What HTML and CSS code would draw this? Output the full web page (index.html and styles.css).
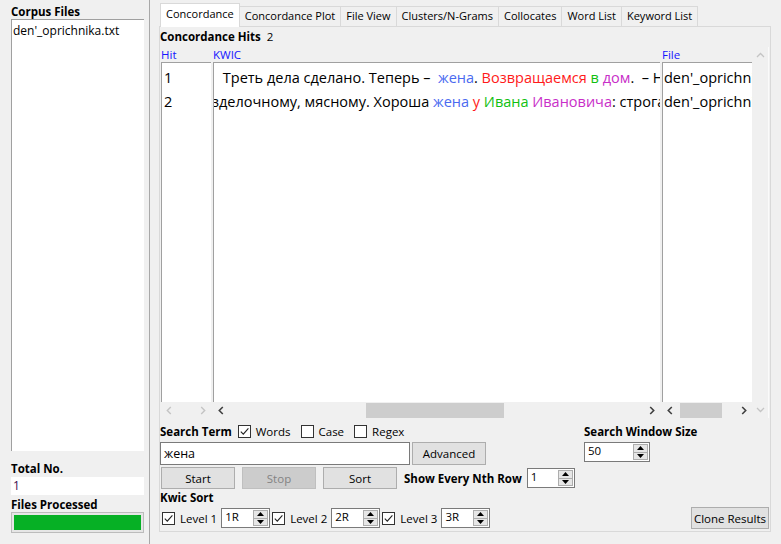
FILE: index.html
```html
<!DOCTYPE html>
<html>
<head>
<meta charset="utf-8">
<link rel="stylesheet" href="styles.css">
</head>
<body>
<div class="app">
  <aside class="side">
    <div class="lbl">Corpus Files</div>
    <div class="list"><div class="item">den'_oprichnika.txt</div></div>
    <div class="lbl total">Total No.</div>
    <div class="field">1</div>
    <div class="lbl">Files Processed</div>
    <div class="progress"><div class="fill"></div></div>
  </aside>
  <main class="main">
    <nav class="tabs">
      <div class="tab active">Concordance</div>
      <div class="tab">Concordance Plot</div>
      <div class="tab">File View</div>
      <div class="tab">Clusters/N-Grams</div>
      <div class="tab">Collocates</div>
      <div class="tab">Word List</div>
      <div class="tab">Keyword List</div>
    </nav>
    <section class="panel">
      <div class="hits"><span class="b">Concordance Hits</span><span class="count">2</span></div>
      <div class="table">
        <div class="col c-hit">
          <div class="head">Hit</div>
          <div class="box">
            <div class="row">1</div>
            <div class="row">2</div>
          </div>
          <div class="hscroll">
            <span class="arr"><svg width="6" height="9" viewBox="0 0 6 9"><path d="M4.8 1L1.3 4.5L4.8 8" stroke="#c4c4c4" stroke-width="1.4" fill="none"/></svg></span>
            <span class="track"></span>
            <span class="arr"><svg width="6" height="9" viewBox="0 0 6 9"><path d="M1.2 1L4.7 4.5L1.2 8" stroke="#c4c4c4" stroke-width="1.4" fill="none"/></svg></span>
          </div>
        </div>
        <div class="col c-kwic">
          <div class="head">KWIC</div>
          <div class="box">
            <div class="row kw"><span class="left-ctx wide">  Треть дела сделано. Теперь –  </span><span class="k">жена</span><span class="right-ctx">. <span class="r">Возвращаемся</span> <span class="g">в</span> <span class="m">дом</span>.  – Н</span></div>
            <div class="row kw"><span class="left-ctx">изделочному, мясному. Хороша </span><span class="k">жена</span><span class="right-ctx"> <span class="r">у</span> <span class="g">Ивана</span> <span class="m">Ивановича</span>: строгая</span></div>
          </div>
          <div class="hscroll">
            <span class="arr"><svg width="6" height="9" viewBox="0 0 6 9"><path d="M4.8 1L1.3 4.5L4.8 8" stroke="#404040" stroke-width="1.6" fill="none"/></svg></span>
            <span class="track"><span class="thumb" style="margin-left:137px;width:138px"></span></span>
            <span class="arr"><svg width="6" height="9" viewBox="0 0 6 9"><path d="M1.2 1L4.7 4.5L1.2 8" stroke="#404040" stroke-width="1.6" fill="none"/></svg></span>
          </div>
        </div>
        <div class="col c-file">
          <div class="head">File</div>
          <div class="box">
            <div class="row">den'_oprichnika.txt</div>
            <div class="row">den'_oprichnika.txt</div>
          </div>
          <div class="hscroll">
            <span class="arr"><svg width="6" height="9" viewBox="0 0 6 9"><path d="M4.8 1L1.3 4.5L4.8 8" stroke="#404040" stroke-width="1.6" fill="none"/></svg></span>
            <span class="track"><span class="thumb" style="margin-left:2px;width:42px"></span></span>
            <span class="arr"><svg width="6" height="9" viewBox="0 0 6 9"><path d="M1.2 1L4.7 4.5L1.2 8" stroke="#404040" stroke-width="1.6" fill="none"/></svg></span>
          </div>
        </div>
        <div class="vscroll">
          <svg width="9" height="6" viewBox="0 0 9 6"><path d="M1 5L4.5 1.5L8 5" stroke="#c4c4c4" stroke-width="1.3" fill="none"/></svg>
          <svg width="9" height="6" viewBox="0 0 9 6"><path d="M1 1L4.5 4.5L8 1" stroke="#c4c4c4" stroke-width="1.3" fill="none"/></svg>
        </div>
      </div>
      <div class="controls">
        <div class="left">
          <div class="line la">
            <span class="b st">Search Term</span>
            <label class="chk"><span class="cb"><svg width="11" height="11" viewBox="0 0 11 11"><path d="M1.8 5.6L4.3 8.2L9.4 2.4" stroke="#222" stroke-width="1.1" fill="none"/></svg></span>Words</label>
            <label class="chk"><span class="cb"></span>Case</label>
            <label class="chk"><span class="cb"></span>Regex</label>
          </div>
          <div class="line lb">
            <div class="input">жена</div>
            <div class="btn adv">Advanced</div>
          </div>
          <div class="line lc">
            <div class="btn w74">Start</div>
            <div class="btn w74 dis">Stop</div>
            <div class="btn w74">Sort</div>
            <span class="b nth">Show Every Nth Row</span>
            <div class="spin s48"><span class="val">1</span><span class="arrows"><span class="ab"><svg width="7" height="4" viewBox="0 0 7 4"><path d="M0 4L3.5 0L7 4Z" fill="#000"/></svg></span><span class="ab"><svg width="7" height="4" viewBox="0 0 7 4"><path d="M0 0L3.5 4L7 0Z" fill="#000"/></svg></span></span></div>
          </div>
          <div class="line ld"><span class="b">Kwic Sort</span></div>
          <div class="line le">
            <label class="chk"><span class="cb"><svg width="11" height="11" viewBox="0 0 11 11"><path d="M1.8 5.6L4.3 8.2L9.4 2.4" stroke="#222" stroke-width="1.1" fill="none"/></svg></span>Level 1</label>
            <div class="spin s49"><span class="val">1R</span><span class="arrows"><span class="ab"><svg width="7" height="4" viewBox="0 0 7 4"><path d="M0 4L3.5 0L7 4Z" fill="#000"/></svg></span><span class="ab"><svg width="7" height="4" viewBox="0 0 7 4"><path d="M0 0L3.5 4L7 0Z" fill="#000"/></svg></span></span></div>
            <label class="chk"><span class="cb"><svg width="11" height="11" viewBox="0 0 11 11"><path d="M1.8 5.6L4.3 8.2L9.4 2.4" stroke="#222" stroke-width="1.1" fill="none"/></svg></span>Level 2</label>
            <div class="spin s49"><span class="val">2R</span><span class="arrows"><span class="ab"><svg width="7" height="4" viewBox="0 0 7 4"><path d="M0 4L3.5 0L7 4Z" fill="#000"/></svg></span><span class="ab"><svg width="7" height="4" viewBox="0 0 7 4"><path d="M0 0L3.5 4L7 0Z" fill="#000"/></svg></span></span></div>
            <label class="chk"><span class="cb"><svg width="11" height="11" viewBox="0 0 11 11"><path d="M1.8 5.6L4.3 8.2L9.4 2.4" stroke="#222" stroke-width="1.1" fill="none"/></svg></span>Level 3</label>
            <div class="spin s49"><span class="val">3R</span><span class="arrows"><span class="ab"><svg width="7" height="4" viewBox="0 0 7 4"><path d="M0 4L3.5 0L7 4Z" fill="#000"/></svg></span><span class="ab"><svg width="7" height="4" viewBox="0 0 7 4"><path d="M0 0L3.5 4L7 0Z" fill="#000"/></svg></span></span></div>
          </div>
        </div>
        <div class="right">
          <div class="line la"><span class="b">Search Window Size</span></div>
          <div class="spin s66"><span class="val">50</span><span class="arrows"><span class="ab"><svg width="7" height="4" viewBox="0 0 7 4"><path d="M0 4L3.5 0L7 4Z" fill="#000"/></svg></span><span class="ab"><svg width="7" height="4" viewBox="0 0 7 4"><path d="M0 0L3.5 4L7 0Z" fill="#000"/></svg></span></span></div>
          <div class="btn clone">Clone Results</div>
        </div>
      </div>
    </section>
  </main>
</div>
</body>
</html>
```

FILE: styles.css
```css
* { box-sizing: border-box; }
body {
  margin: 0;
  width: 781px;
  height: 544px;
  overflow: hidden;
  background: #f0f0f0;
  font-family: "Open Sans", "Noto Sans", sans-serif;
  font-size: 11.5px;
  color: #000;
}
.b { font-weight: 700; }
.app { display: flex; height: 544px; }

/* left side */
.side {
  width: 150px;
  flex: none;
  padding: 4px 5px 11px 11px;
  border-right: 1px solid #a8a8a8;
  display: flex;
  flex-direction: column;
}
.lbl { font-weight: 700; height: 16px; line-height: 16px; flex: none; }
.side .lbl:first-child { height: 15px; line-height: 15px; }
.list {
  flex: 1;
  background: #fff;
  border-top: 1px solid #a0a0a0;
  border-left: 1px solid #a0a0a0;
  padding: 1px 1px;
  font-size: 12px;
}
.item { line-height: 20px; }
.total { margin-top: 10px; }
.field {
  height: 18px;
  line-height: 18px;
  background: #fff;
  padding-left: 2px;
  color: #3c0a50;
  flex: none;
  font-size: 12px;
}
.field + .lbl { height: 17px; line-height: 19px; }
.progress {
  height: 21px;
  flex: none;
  border: 1px solid #bcbcbc;
  background: #e6e6e6;
  padding: 2px;
}
.fill { height: 100%; background: #06b025; }

/* main */
.main {
  flex: 1;
  padding: 0 10px 12px 9px;
  display: flex;
  flex-direction: column;
}
.tabs {
  display: flex;
  align-items: flex-end;
  height: 27px;
  padding-left: 1px;
  position: relative;
  z-index: 1;
  margin-bottom: -1px;
  font-size: 11px;
}
.tab {
  height: 20px;
  margin-bottom: 1px;
  line-height: 18px;
  padding: 0 5px;
  border: 1px solid #d9d9d9;
  border-bottom: none;
  border-left: none;
  background: #f0f0f0;
  white-space: nowrap;
}
.tab.active {
  height: 24px;
  margin-bottom: 0;
  line-height: 20px;
  background: #fff;
  border-left: 1px solid #d9d9d9;
  padding: 0 5px;
}
.panel {
  flex: 1;
  border: 1px solid #d9d9d9;
  background: #f0f0f0;
  display: flex;
  flex-direction: column;
}
.hits { height: 20px; line-height: 20px; display: flex; flex: none; }
.count { margin-left: 6px; }

.table {
  display: flex;
  height: 371px;
  flex: none;
}
.col { display: flex; flex-direction: column; }
.c-hit { width: 50px; margin-left: 1px; }
.c-kwic { width: 447px; margin-left: 2px; }
.c-file { width: 90px; margin-left: 2px; }
.head { height: 15px; line-height: 15px; color: #1515ff; flex: none; }
.box {
  height: 340px;
  flex: none;
  background: #fff;
  border-top: 1px solid #a0a0a0;
  border-left: 1px solid #a0a0a0;
  padding-top: 3px;
  overflow: hidden;
  font-size: 14.5px;
}
.row { height: 24px; line-height: 24px; white-space: nowrap; }
.c-hit .row { padding-left: 2px; }
.c-file .row { padding-left: 1px; }
.kw { display: flex; white-space: pre; }
.left-ctx {
  width: 219px;
  flex: none;
  display: flex;
  justify-content: flex-end;
  overflow: hidden;
  white-space: pre;
}
.left-ctx.wide { width: 224px; }
.right-ctx { white-space: pre; }
.k { color: #4a6af0; flex: none; }
.r { color: #ff1a1a; }
.g { color: #10c010; }
.m { color: #c82ec8; }

.hscroll { height: 16px; display: flex; align-items: stretch; flex: none; }
.arr { width: 16px; display: flex; align-items: center; justify-content: center; flex: none; }
.track { flex: 1; display: flex; padding-top: 1px; }
.thumb { display: block; background: #cdcdcd; height: 15px; }

.vscroll {
  width: 16px;
  margin-left: 1px;
  display: flex;
  flex-direction: column;
  justify-content: space-between;
  align-items: center;
  padding: 5px 0 5px;
  border-right: 1px solid #fafafa;
}

/* controls */
.controls { flex: 1; display: flex; }
.left { width: 424px; display: flex; flex-direction: column; }
.right { flex: 1; display: flex; flex-direction: column; align-items: flex-start; }
.line { display: flex; align-items: center; flex: none; }
.la { margin-top: 5px; height: 16px; }
.lb { margin-top: 3px; height: 23px; }
.lc { margin-top: 2px; height: 22px; }
.ld { height: 17px; }
.le { margin-top: 1px; height: 22px; }
.st { margin-right: 6px; }
.chk { display: flex; align-items: center; margin-right: 10px; }
.cb {
  width: 13px;
  height: 13px;
  border: 1px solid #333;
  background: #fff;
  margin-right: 5px;
  display: flex;
  align-items: center;
  justify-content: center;
}
.input {
  width: 250px;
  height: 23px;
  border: 1px solid #7a7a7a;
  background: #fff;
  line-height: 21px;
  padding-left: 3px;
  font-size: 12.5px;
}
.btn {
  height: 22px;
  border: 1px solid #adadad;
  background: #e1e1e1;
  display: flex;
  align-items: center;
  justify-content: center;
  white-space: nowrap;
}
.adv { width: 74px; height: 23px; margin-left: 2px; }
.w74 { width: 74px; margin-right: 7px; }
.lc .w74:first-child { margin-left: 1px; }
.dis { background: #cccccc; border-color: #bfbfbf; color: #838383; }
.nth { margin-right: 5px; }
.spin {
  height: 20px;
  border: 1px solid #7a7a7a;
  background: #fff;
  display: flex;
  align-items: stretch;
  padding: 1px;
}
.s48 { width: 48px; }
.s49 { width: 49px; }
.s66 { width: 66px; margin-top: 3px; }
.val { flex: 1; padding-left: 2px; line-height: 14px; }
.arrows { width: 15px; display: flex; flex-direction: column; }
.ab {
  flex: 1;
  border: 1px solid #adadad;
  background: #e6e6e6;
  display: flex;
  align-items: center;
  justify-content: center;
}
.ab + .ab { border-top: none; }
.le .chk { margin-right: 4px; }
.le .cb { margin-right: 5px; }
.le > .chk:first-child { margin-left: 2px; }
.le .spin { margin-right: 2px; }
.clone { margin-top: auto; margin-bottom: 2px; align-self: flex-end; margin-right: 1px; width: 78px; height: 22px; }
```
